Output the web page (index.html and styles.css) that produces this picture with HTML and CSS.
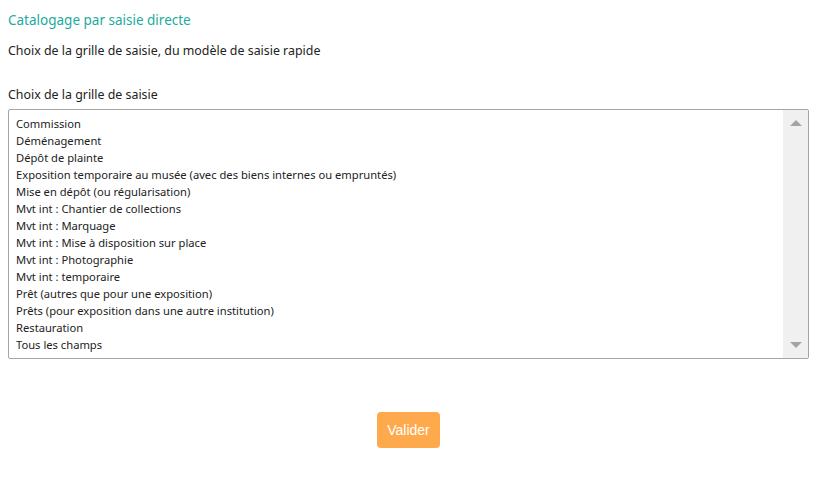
FILE: index.html
```html
<!DOCTYPE html>
<html lang="fr">
<head>
    <meta charset="UTF-8">
    <title>Catalogage par saisie directe</title>
    <link rel="stylesheet" href="styles.css">
</head>
<body>
<div class="page">
    <h2 class="page-title">Catalogage par saisie directe</h2>
    <p class="intro">Choix de la grille de saisie, du modèle de saisie rapide</p>

    <label class="field-label">Choix de la grille de saisie</label>
    <div class="listbox">
        <ul class="options">
            <li>Commission</li>
            <li>Déménagement</li>
            <li>Dépôt de plainte</li>
            <li>Exposition temporaire au musée (avec des biens internes ou empruntés)</li>
            <li>Mise en dépôt (ou régularisation)</li>
            <li>Mvt int : Chantier de collections</li>
            <li>Mvt int : Marquage</li>
            <li>Mvt int : Mise à disposition sur place</li>
            <li>Mvt int : Photographie</li>
            <li>Mvt int : temporaire</li>
            <li>Prêt (autres que pour une exposition)</li>
            <li>Prêts (pour exposition dans une autre institution)</li>
            <li>Restauration</li>
            <li>Tous les champs</li>
        </ul>
        <div class="scrollbar">
            <span class="arrow arrow-up"></span>
            <span class="arrow arrow-down"></span>
        </div>
    </div>

    <div class="actions">
        <button class="submit-button" type="button">Valider</button>
    </div>
</div>
</body>
</html>
```

FILE: styles.css
```css
body {
    margin: 0;
    background-color: #ffffff;
    font-family: "Noto Sans", "Open Sans", sans-serif;
    color: #222222;
}

.page {
    padding: 9px 8px 0 8px;
    display: flex;
    flex-direction: column;
}

.page-title {
    margin: 0;
    font-size: 13.5px;
    font-weight: 400;
    line-height: 22px;
    color: #1bab9c;
}

.intro {
    margin: 11px 0 0 0;
    font-size: 12.4px;
    line-height: 18px;
}

.field-label {
    margin-top: 26px;
    font-size: 12.4px;
    line-height: 18px;
}

.listbox {
    margin-top: 5px;
    height: 248px;
    border: 1px solid #a5a5a5;
    border-radius: 2px;
    display: flex;
}

.options {
    flex: 1;
    list-style: none;
    margin: 0;
    padding: 5px 7px 0 7px;
    font-size: 11.2px;
    line-height: 17px;
}

.scrollbar {
    width: 25px;
    background-color: #f0f0f0;
    display: flex;
    flex-direction: column;
    justify-content: space-between;
    align-items: center;
    padding: 10px 0;
}

.arrow {
    width: 0;
    height: 0;
    border-left: 6px solid transparent;
    border-right: 6px solid transparent;
}

.arrow-up {
    border-bottom: 6px solid #a3a3a3;
}

.arrow-down {
    border-top: 6px solid #a3a3a3;
}

.actions {
    display: flex;
    justify-content: center;
    margin-top: 53px;
}

.submit-button {
    font-family: "Liberation Sans", Arial, sans-serif;
    font-size: 14px;
    color: #ffffff;
    background-color: #ffa94d;
    border: none;
    border-radius: 4px;
    width: 63px;
    height: 36px;
    padding: 0;
}
```
